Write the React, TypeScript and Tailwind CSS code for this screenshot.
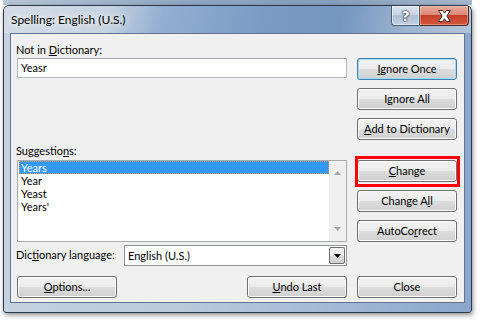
import React from "react";

const FONT = "font-['Segoe_UI','Lato','Noto_Sans',sans-serif]";

function Btn({
  children,
  isDefault = false,
  className = "",
}: {
  children: React.ReactNode;
  isDefault?: boolean;
  className?: string;
}) {
  return (
    <div
      className={`h-[22px] w-[100px] shrink-0 rounded-[3px] border flex items-center justify-center text-[11px] leading-none text-black bg-[linear-gradient(#f2f2f2_0%,#ebebeb_50%,#dddddd_50%,#cfcfcf_100%)] ${
        isDefault
          ? "border-[#3c7fb1] shadow-[inset_0_0_0_1px_#9fdcf7]"
          : "border-[#707070] shadow-[inset_0_0_0_1px_#fcfcfc]"
      } ${className}`}
    >
      <span className="-mt-[1px]">{children}</span>
    </div>
  );
}

function Arrow({ down = false, color = "#a6a6a6" }: { down?: boolean; color?: string }) {
  return (
    <svg width="7" height="4" viewBox="0 0 7 4">
      <path d={down ? "M0 0H7L3.5 4Z" : "M0 4H7L3.5 0Z"} fill={color} />
    </svg>
  );
}

export default function App() {
  const suggestions = ["Years", "Year", "Yeast", "Years'"];

  return (
    <div className={`w-[480px] h-[322px] bg-white overflow-hidden ${FONT}`}>
      {/* window behind */}
      <div className="h-[5px] ml-[3px] w-[469px] bg-[linear-gradient(90deg,#b7c6d6,#8ea6c2_40%,#869fbd_70%,#a5b7cc)]" />

      <div className="ml-[3px] w-[469px] h-[308px] rounded-t-[6px] rounded-b-[3px] border border-[#2c394b] bg-[linear-gradient(90deg,#c4d2e1_0%,#b8c9dc_40%,#9fb7d4_75%,#8aa6ca_100%)] shadow-[1px_2px_5px_rgba(0,0,0,0.45)] flex flex-col">
        {/* title bar */}
        <div className="h-[27px] flex items-start rounded-t-[5px] bg-[linear-gradient(100deg,#d2dce7_0%,#c7d4e2_22%,#93aed2_34%,#7b9bc4_55%,#7596c0_72%,#9db3cf_86%,#b3c4d8_100%)]">
          <div className="pl-[7px] mt-[6px] leading-[16px] text-[12px] text-black [text-shadow:0_0_6px_#fff,0_0_10px_#fff]">
            Spelling: English (U.S.)
          </div>
          <div className="ml-auto mr-[2px] flex h-[20px]">
            <div className="w-[29px] h-full border border-t-0 border-[#4a5b74] rounded-bl-[4px] bg-[linear-gradient(#dbe4ee_0%,#c9d6e5_45%,#aebfd4_50%,#c2d1e2_100%)] shadow-[inset_0_0_0_1px_rgba(255,255,255,0.45)] flex items-center justify-center">
              <span className="text-[14px] font-bold leading-none text-white font-['DejaVu_Sans',sans-serif] [text-shadow:0_0_1px_#243040,0_0_1px_#243040,0_0_2px_#243040]">
                ?
              </span>
            </div>
            <div className="w-[49px] h-full border border-t-0 border-l-0 border-[#4a2a24] rounded-br-[4px] bg-[linear-gradient(#e9ab9b_0%,#dc8a76_45%,#c5402a_50%,#d3563d_100%)] shadow-[inset_0_0_0_1px_rgba(255,220,210,0.4)] flex items-center justify-center">
              <svg width="15" height="12" viewBox="0 0 15 12">
                <path
                  d="M1.5 0.5H5.5L7.5 3.2L9.5 0.5H13.5L9.8 6L13.5 11.5H9.5L7.5 8.8L5.5 11.5H1.5L5.2 6Z"
                  fill="#ffffff"
                  stroke="#3b2a2a"
                  strokeWidth="1"
                />
              </svg>
            </div>
          </div>
        </div>

        {/* client area */}
        <div className="mx-[6px] h-[270px] border border-[#5d7494] bg-[#f0f0f0] flex pl-[6px] pr-[7px] pt-[8px] text-[11px] text-black">
          {/* left column */}
          <div className="w-[331px] flex flex-col">
            <div className="h-[16px] leading-[16px] -ml-[1px]">
              Not in <u>D</u>ictionary:
            </div>
            <div className="h-[20px] border border-[#b3b8bf] border-t-[#9da2aa] bg-white pl-[3px] leading-[18px]">
              Yeasr
            </div>

            <div className="mt-[65px] h-[17px] leading-[16px] -ml-[1px]">
              Suggestio<u>n</u>s:
            </div>
            <div className="h-[82px] border border-[#a6abb2] bg-white flex">
              <div className="flex-1 pl-[1px]">
                {suggestions.map((s, i) => (
                  <div
                    key={s}
                    className={`h-[13px] leading-[13px] pl-[2px] ${
                      i === 0
                        ? "bg-[#3399ff] text-white outline outline-1 outline-dotted outline-[#d89a58] -outline-offset-1"
                        : ""
                    }`}
                  >
                    {s}
                  </div>
                ))}
              </div>
              <div className="w-[17px] bg-[#f0f0f0] flex flex-col items-center justify-between py-[10px]">
                <Arrow />
                <Arrow down />
              </div>
            </div>

            <div className="mt-[3px] h-[21px] flex items-center">
              <div className="w-[108px] -ml-[1px]">
                Dic<u>t</u>ionary language:
              </div>
              <div className="flex-1 h-full border border-[#8f9399] bg-white flex items-stretch p-[1px]">
                <div className="flex-1 pl-[2px] leading-[17px]">English (U.S.)</div>
                <div className="w-[16px] border border-[#707070] rounded-[2px] bg-[linear-gradient(#f2f2f2_0%,#ebebeb_50%,#dddddd_50%,#cfcfcf_100%)] flex items-center justify-center">
                  <Arrow down color="#000" />
                </div>
              </div>
            </div>

            <div className="mt-[10px] flex justify-between">
              <Btn>
                <u>O</u>ptions...
              </Btn>
              <Btn>
                <u>U</u>ndo Last
              </Btn>
            </div>
          </div>

          {/* right column */}
          <div className="ml-[10px] w-[100px] flex flex-col">
            <Btn isDefault className="mt-[16px]">
              <u>I</u>gnore Once
            </Btn>
            <Btn className="mt-[8px]">
              I<u>g</u>nore All
            </Btn>
            <Btn className="mt-[8px]">
              <u>A</u>dd to Dictionary
            </Btn>
            <div className="relative mt-[20px]">
              <Btn>
                <u>C</u>hange
              </Btn>
              <span className="absolute -left-[2px] -right-[3px] -top-[4px] -bottom-[5px] border-[3px] border-[#ff0000]" />
            </div>
            <Btn className="mt-[8px]">
              Change A<u>l</u>l
            </Btn>
            <Btn className="mt-[8px]">
              AutoCo<u>r</u>rect
            </Btn>
            <Btn className="mt-[34px]">Close</Btn>
          </div>
        </div>
      </div>
    </div>
  );
}
